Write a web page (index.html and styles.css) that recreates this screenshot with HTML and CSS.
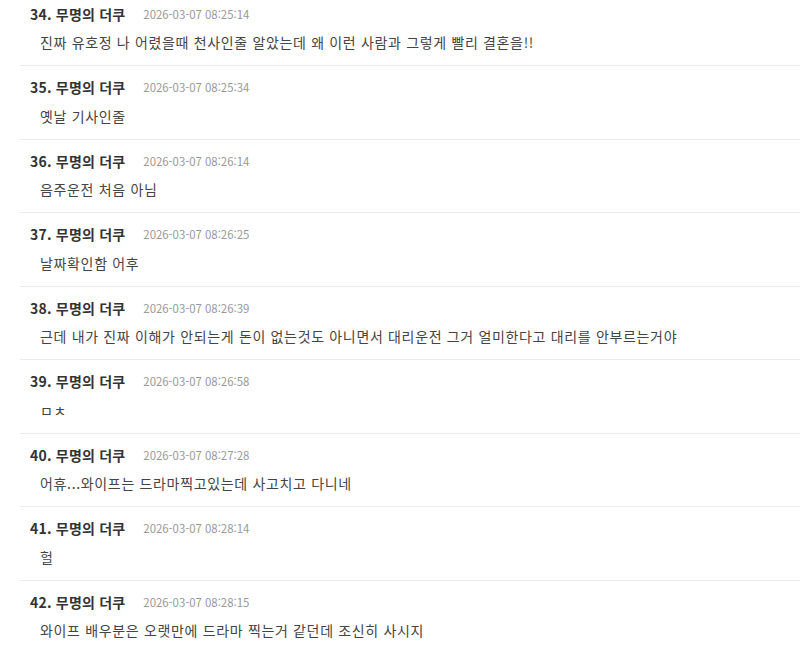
FILE: index.html
```html
<!DOCTYPE html>
<html lang="ko">
    <head>
        <meta charset="utf-8">
        <meta name="viewport" content="width=device-width, initial-scale=1.0">
        <title>댓글</title>
        <link rel="stylesheet" href="styles.css">
    </head>
    <body>
        <ul class="comment-list">
            <li class="comment">
                <div class="comment-head"><span class="comment-name">34. 무명의 더쿠</span><span class="comment-date">2026-03-07 08:25:14</span></div>
                <div class="comment-body">진짜 유호정 나 어렸을때 천사인줄 알았는데 왜 이런 사람과 그렇게 빨리 결혼을!!</div>
            </li>
            <li class="comment">
                <div class="comment-head"><span class="comment-name">35. 무명의 더쿠</span><span class="comment-date">2026-03-07 08:25:34</span></div>
                <div class="comment-body">옛날 기사인줄</div>
            </li>
            <li class="comment">
                <div class="comment-head"><span class="comment-name">36. 무명의 더쿠</span><span class="comment-date">2026-03-07 08:26:14</span></div>
                <div class="comment-body">음주운전 처음 아님</div>
            </li>
            <li class="comment">
                <div class="comment-head"><span class="comment-name">37. 무명의 더쿠</span><span class="comment-date">2026-03-07 08:26:25</span></div>
                <div class="comment-body">날짜확인함 어후</div>
            </li>
            <li class="comment">
                <div class="comment-head"><span class="comment-name">38. 무명의 더쿠</span><span class="comment-date">2026-03-07 08:26:39</span></div>
                <div class="comment-body">근데 내가 진짜 이해가 안되는게 돈이 없는것도 아니면서 대리운전 그거 얼미한다고 대리를 안부르는거야</div>
            </li>
            <li class="comment">
                <div class="comment-head"><span class="comment-name">39. 무명의 더쿠</span><span class="comment-date">2026-03-07 08:26:58</span></div>
                <div class="comment-body">ㅁㅊ</div>
            </li>
            <li class="comment">
                <div class="comment-head"><span class="comment-name">40. 무명의 더쿠</span><span class="comment-date">2026-03-07 08:27:28</span></div>
                <div class="comment-body">어휴...와이프는 드라마찍고있는데 사고치고 다니네</div>
            </li>
            <li class="comment">
                <div class="comment-head"><span class="comment-name">41. 무명의 더쿠</span><span class="comment-date">2026-03-07 08:28:14</span></div>
                <div class="comment-body">헐</div>
            </li>
            <li class="comment">
                <div class="comment-head"><span class="comment-name">42. 무명의 더쿠</span><span class="comment-date">2026-03-07 08:28:15</span></div>
                <div class="comment-body">와이프 배우분은 오랫만에 드라마 찍는거 같던데 조신히 사시지</div>
            </li>
        </ul>
    </body>
</html>
```

FILE: styles.css
```css
*{
    padding: 0;
    margin: 0;
    box-sizing: border-box;
}
html { font-family: "Noto Sans CJK KR", "Noto Sans", sans-serif; }
body { background-color: #fff; color: #333; overflow: hidden; }
.comment-list{
    list-style: none;
    margin-left: 20px;
    margin-top: -7.5px; /* page is scrolled into the thread */
}
.comment{
    padding: 11px 0 13px 10px;
    border-bottom: 1px solid #ebebeb;
}
.comment-head{
    display: flex;
    align-items: center;
    height: 20px;
}
.comment-name{
    font-size: 14px;
    font-weight: bold;
    letter-spacing: 0.2px;
    color: #333;
}
.comment-date{
    font-size: 11.4px;
    color: #999;
    margin-left: 18px;
}
.comment-body{
    margin-top: 8.5px;
    padding-left: 10px;
    font-size: 14px;
    line-height: 20px;
    letter-spacing: 0.66px;
    color: #444;
}
```
